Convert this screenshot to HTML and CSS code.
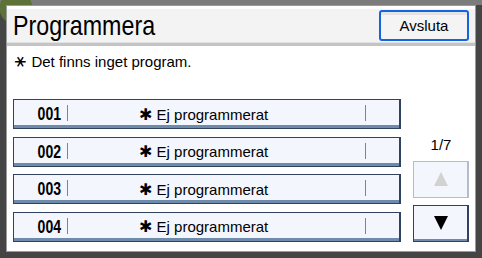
FILE: index.html
```html
<!DOCTYPE html>
<html lang="sv">
<head>
    <meta charset="UTF-8">
    <title>Programmera</title>
    <link rel="stylesheet" href="styles.css">
</head>
<body>
    <div class="panel">
        <div class="header">
            <h1 class="title">Programmera</h1>
            <button class="btn-exit">Avsluta</button>
        </div>

        <p class="message"><span class="mark">&#8727;</span> Det finns inget program.</p>

        <div class="content">
            <div class="list">
                <div class="row">
                    <span class="num">001</span><span class="sep"></span>
                    <span class="name"><span class="star">&#10033;</span> Ej programmerat</span>
                    <span class="sep"></span><span class="tail"></span>
                </div>
                <div class="row">
                    <span class="num">002</span><span class="sep"></span>
                    <span class="name"><span class="star">&#10033;</span> Ej programmerat</span>
                    <span class="sep"></span><span class="tail"></span>
                </div>
                <div class="row">
                    <span class="num">003</span><span class="sep"></span>
                    <span class="name"><span class="star">&#10033;</span> Ej programmerat</span>
                    <span class="sep"></span><span class="tail"></span>
                </div>
                <div class="row">
                    <span class="num">004</span><span class="sep"></span>
                    <span class="name"><span class="star">&#10033;</span> Ej programmerat</span>
                    <span class="sep"></span><span class="tail"></span>
                </div>
            </div>

            <div class="pager">
                <div class="page">1/7</div>
                <button class="btn-page disabled"><span class="tri up"></span></button>
                <button class="btn-page"><span class="tri down"></span></button>
            </div>
        </div>
    </div>
</body>
</html>
```

FILE: styles.css
```css
html, body {
    margin: 0;
    height: 100%;
}
body {
    font-family: "Liberation Sans", Arial, sans-serif;
    background:
        radial-gradient(circle at 16px 8px, #5c7236 16px, transparent 17px),
        linear-gradient(#7c7c7c 0, #7c7c7c 5px, #454545 5px);
    padding: 5px 6px 6px 6px;
    box-sizing: border-box;
    overflow: hidden;
}

/* main white window */
.panel {
    width: 470px;
    height: 247px;
    background: #fff;
    box-sizing: border-box;
    border: 1px solid #9a9a9a;
}

.header {
    margin-top: 3px;
    height: 33px;
    background: #f3f3f3;
    border-bottom: 1px solid #e2e2e2;
    box-shadow: 0 3px 0 #c4c4c4;
    display: flex;
    align-items: center;
    justify-content: space-between;
    padding: 0 6px 0 6px;
}
.title {
    margin: 0;
    font-size: 28px;
    line-height: 32px;
    font-weight: normal;
    color: #000;
    transform: scaleX(0.83);
    transform-origin: left center;
}
.btn-exit {
    width: 90px;
    height: 31px;
    border: 2px solid #1563e0;
    border-radius: 3px;
    background: linear-gradient(#e4e4e4 0, #e4e4e4 3px, #f4f4f4 3px);
    font-family: inherit;
    font-size: 15px;
    color: #000;
    padding: 0;
}

.message {
    margin: 10px 0 0 6px;
    font-size: 15px;
    line-height: 18px;
    color: #000;
}
.mark {
    display: inline-block;
    transform: rotate(90deg);
    font-family: "DejaVu Sans", sans-serif;
    font-size: 17px;
    line-height: 15px;
}

.content {
    display: flex;
    margin: 28px 0 0 6px;
}
.list {
    width: 388px;
    display: grid;
    grid-template-rows: repeat(4, 30px);
    row-gap: 7.67px;
}
.row {
    display: flex;
    align-items: center;
    background: #f4f6fd;
    border: 1px solid #2f4260;
    border-right-width: 2px;
    box-shadow: inset 0 -3px 0 #6f8bab;
    box-sizing: border-box;
}
.num {
    width: 45px;
    text-align: right;
    padding-right: 8px;
    font-weight: bold;
    font-size: 19px;
    line-height: 20px;
    transform: scaleX(0.74);
    transform-origin: right center;
    color: #000;
}
.sep {
    width: 1px;
    height: 16px;
    margin-bottom: 2px;
    background: #5f8cb0;
}
.name {
    flex: 1;
    padding-left: 71px;
    font-size: 15px;
    color: #000;
}
.star {
    font-family: "DejaVu Sans", sans-serif;
    font-size: 16px;
    line-height: 15px;
}
.tail {
    width: 33px;
}

.pager {
    margin-left: 12px;
    width: 56px;
    display: flex;
    flex-direction: column;
    justify-content: flex-end;
    align-items: stretch;
}
.page {
    text-align: center;
    font-size: 15px;
    line-height: 18px;
    margin-bottom: 7px;
}
.btn-page {
    height: 37px;
    padding: 0;
    background: #f4f6fd;
    border: 1px solid #2f4260;
    border-right-width: 2px;
    box-shadow: inset 0 -2px 0 #6f8bab;
    display: flex;
    align-items: center;
    justify-content: center;
}
.btn-page + .btn-page {
    margin-top: 7px;
}
.btn-page.disabled {
    border-color: #b4bccb;
    box-shadow: none;
}
.tri {
    width: 0;
    height: 0;
    border-left: 7px solid transparent;
    border-right: 7px solid transparent;
}
.tri.up {
    border-bottom: 14px solid #d2d2d2;
}
.tri.down {
    border-top: 14px solid #000;
}
```
